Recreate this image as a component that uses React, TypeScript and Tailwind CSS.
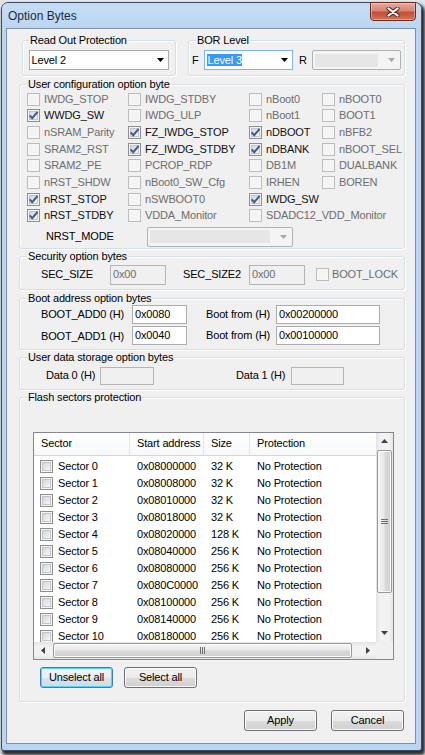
import React from "react";

type Cell = [string, boolean, boolean] | null;

const cfgRows: Cell[][] = [
  [["IWDG_STOP", false, true], ["IWDG_STDBY", false, true], ["nBoot0", false, true], ["nBOOT0", false, true]],
  [["WWDG_SW", true, false], ["IWDG_ULP", false, true], ["nBoot1", false, true], ["BOOT1", false, true]],
  [["nSRAM_Parity", false, true], ["FZ_IWDG_STOP", true, false], ["nDBOOT", true, false], ["nBFB2", false, true]],
  [["SRAM2_RST", false, true], ["FZ_IWDG_STDBY", true, false], ["nDBANK", true, false], ["nBOOT_SEL", false, true]],
  [["SRAM2_PE", false, true], ["PCROP_RDP", false, true], ["DB1M", false, true], ["DUALBANK", false, true]],
  [["nRST_SHDW", false, true], ["nBoot0_SW_Cfg", false, true], ["IRHEN", false, true], ["BOREN", false, true]],
  [["nRST_STOP", true, false], ["nSWBOOT0", false, true], ["IWDG_SW", true, false], null],
  [["nRST_STDBY", true, false], ["VDDA_Monitor", false, true], ["SDADC12_VDD_Monitor", false, true], null],
];

const colW = ["w-[101px]", "w-[121px]", "w-[73px]", "flex-1"];

const sectors: [string, string, string][] = [
  ["Sector 0", "0x08000000", "32 K"],
  ["Sector 1", "0x08008000", "32 K"],
  ["Sector 2", "0x08010000", "32 K"],
  ["Sector 3", "0x08018000", "32 K"],
  ["Sector 4", "0x08020000", "128 K"],
  ["Sector 5", "0x08040000", "256 K"],
  ["Sector 6", "0x08080000", "256 K"],
  ["Sector 7", "0x080C0000", "256 K"],
  ["Sector 8", "0x08100000", "256 K"],
  ["Sector 9", "0x08140000", "256 K"],
  ["Sector 10", "0x08180000", "256 K"],
];

function Box({ checked = false, disabled = false }: { checked?: boolean; disabled?: boolean }) {
  return (
    <span
      className={`flex h-[13px] w-[13px] shrink-0 items-center justify-center border ${
        disabled
          ? "border-[#bcbcbc] bg-[#f7f7f7]"
          : "border-[#8e8f8f] bg-[#f4f4f4]"
      }`}
    >
      <span
        className={`flex h-[9px] w-[9px] items-center justify-center ${
          disabled
            ? "bg-[#f4f4f4]"
            : "border border-[#c2c5c9] bg-[linear-gradient(135deg,#d3d6da,#f7f7f7)]"
        }`}
      >
        {checked && (
          <svg width="11" height="11" viewBox="0 0 11 11" className="shrink-0">
            <path d="M1.6 5.4 L4.2 8.2 L9.6 1.8" fill="none" stroke="#3d5a96" strokeWidth="2" />
          </svg>
        )}
      </span>
    </span>
  );
}

function Check({ label, checked, disabled }: { label: string; checked: boolean; disabled: boolean }) {
  return (
    <div className="flex items-center whitespace-nowrap">
      <Box checked={checked} disabled={disabled} />
      <span className={`ml-[4px] ${disabled ? "text-[#6d6d6d]" : "text-[#111111]"}`}>{label}</span>
    </div>
  );
}

function Arrow({ color }: { color: string }) {
  return (
    <svg width="7" height="4" viewBox="0 0 7 4" className="shrink-0">
      <polygon points="0,0 7,0 3.5,4" fill={color} />
    </svg>
  );
}

function Combo({
  w,
  text,
  focus = false,
  disabled = false,
}: {
  w: string;
  text?: string;
  focus?: boolean;
  disabled?: boolean;
}) {
  if (disabled) {
    return (
      <div className={`${w} flex h-[20px] shrink-0 items-center rounded-[2px] border border-[#adb2b5] bg-[#f4f4f4] pl-[2px] pr-[5px]`}>
        <div className="mr-[10px] h-[13px] flex-1 bg-[#e6e6e6]" />
        <Arrow color="#a6a6a6" />
      </div>
    );
  }
  return (
    <div
      className={`${w} flex h-[20px] shrink-0 items-center border bg-white pr-[4px] ${
        focus ? "border-[#7eb4ea] pl-[2px]" : "border-[#acacac] pl-[1px]"
      }`}
    >
      <div className="flex-1">
        <span className={`px-[0.5px] leading-[13px] ${focus ? "bg-[#3399ff] text-white" : "text-black"}`}>{text}</span>
      </div>
      <Arrow color="#000" />
    </div>
  );
}

function Input({ w, value, disabled = false, h = "h-[20px]" }: { w: string; value?: string; disabled?: boolean; h?: string }) {
  return (
    <div
      className={`${w} ${h} flex shrink-0 items-center border pl-[2px] ${
        disabled ? "border-[#b3b5b9] bg-[#f0f0f0] text-[#6d6d6d]" : "border-[#abadb3] bg-white text-black"
      }`}
    >
      {value}
    </div>
  );
}

function Btn({ w, label, def = false }: { w: string; label: string; def?: boolean }) {
  return (
    <div
      className={`${w} flex h-[21px] shrink-0 items-center justify-center rounded-[3px] border ${
        def
          ? "border-[#3c7fb1] bg-[linear-gradient(180deg,#f1f6f9_0%,#e6eef3_50%,#d9e4eb_50%,#cfdbe4_100%)] shadow-[inset_0_0_0_1px_#56d1f9]"
          : "border-[#707070] bg-[linear-gradient(180deg,#f2f2f2_0%,#ebebeb_50%,#dddddd_50%,#cfcfcf_100%)] shadow-[inset_0_0_0_1px_#fbfbfb]"
      }`}
    >
      {label}
    </div>
  );
}

function Group({
  label,
  className,
  legendMl = "ml-[7px]",
  children,
}: {
  label: string;
  className: string;
  legendMl?: string;
  children: React.ReactNode;
}) {
  return (
    <fieldset
      className={`shrink-0 rounded-[3px] border border-[#d5dfe5] shadow-[inset_1px_1px_0_#ffffff,1px_1px_0_#ffffff] ${className}`}
    >
      <legend className={`${legendMl} bg-[#f0f0f0] px-[1px] leading-[13px]`}>{label}</legend>
      {children}
    </fieldset>
  );
}

function VScroll() {
  return (
    <div className="flex h-[209px] w-[17px] flex-col bg-[linear-gradient(90deg,#e3e3e3,#f2f2f2_25%,#f2f2f2_75%,#e6e6e6)]">
      <div className="flex h-[17px] items-center justify-center">
        <svg width="7" height="4" viewBox="0 0 7 4">
          <polygon points="3.5,0 7,4 0,4" fill="#404040" />
        </svg>
      </div>
      <div className="mx-[1px] flex h-[143px] flex-col items-center justify-center gap-[1px] rounded-[2px] border border-[#9a9a9a] bg-[linear-gradient(90deg,#f5f5f5,#e9e9e9_45%,#d9d9d9_55%,#cfcfcf)] shadow-[inset_0_0_0_1px_#fafafa]">
        <div className="h-[1px] w-[7px] bg-[#6f6f6f]" />
        <div className="h-[1px] w-[7px] bg-[#6f6f6f]" />
        <div className="h-[1px] w-[7px] bg-[#6f6f6f]" />
      </div>
      <div className="flex-1" />
      <div className="flex h-[17px] items-center justify-center">
        <svg width="7" height="4" viewBox="0 0 7 4">
          <polygon points="0,0 7,0 3.5,4" fill="#404040" />
        </svg>
      </div>
    </div>
  );
}

function HScroll() {
  return (
    <div className="flex h-[17px] w-[342px] items-stretch bg-[linear-gradient(180deg,#e3e3e3,#f2f2f2_25%,#f2f2f2_75%,#e6e6e6)]">
      <div className="flex w-[17px] items-center justify-center">
        <svg width="4" height="7" viewBox="0 0 4 7">
          <polygon points="0,3.5 4,0 4,7" fill="#404040" />
        </svg>
      </div>
      <div className="my-[1px] ml-[2px] flex w-[299px] items-center justify-center gap-[1px] rounded-[2px] border border-[#9a9a9a] bg-[linear-gradient(180deg,#f5f5f5,#e9e9e9_45%,#d9d9d9_55%,#cfcfcf)] shadow-[inset_0_0_0_1px_#fafafa]">
        <div className="h-[7px] w-[1px] bg-[#6f6f6f]" />
        <div className="h-[7px] w-[1px] bg-[#6f6f6f]" />
        <div className="h-[7px] w-[1px] bg-[#6f6f6f]" />
      </div>
      <div className="flex-1" />
      <div className="flex w-[17px] items-center justify-center">
        <svg width="4" height="7" viewBox="0 0 4 7">
          <polygon points="0,0 4,3.5 0,7" fill="#404040" />
        </svg>
      </div>
    </div>
  );
}

function SectorList() {
  return (
    <div className="flex h-[228px] w-[361px] flex-col border border-[#828790] bg-white">
      <div className="flex h-[209px]">
        <div className="flex w-[342px] flex-col">
          <div className="flex h-[23px] shrink-0 border-b border-[#d5d5d5] bg-[linear-gradient(180deg,#ffffff,#f7f8f9)]">
            <div className="flex w-[96px] items-center border-r border-[#e3e5e8] pl-[7px]">Sector</div>
            <div className="flex w-[74px] items-center border-r border-[#e3e5e8] pl-[7px]">Start address</div>
            <div className="flex w-[46px] items-center border-r border-[#e3e5e8] pl-[7px]">Size</div>
            <div className="flex w-[126px] items-center pl-[7px]">Protection</div>
          </div>
          <div className="h-[186px] overflow-hidden pt-[2px]">
            {sectors.map(([name, addr, size]) => (
              <div key={name} className="flex h-[17px] items-center whitespace-nowrap">
                <div className="flex w-[96px] items-center pl-[6px]">
                  <Box />
                  <span className="ml-[5px]">{name}</span>
                </div>
                <div className="w-[74px] pl-[7px]">{addr}</div>
                <div className="w-[46px] pl-[7px]">{size}</div>
                <div className="w-[126px] pl-[7px]">No Protection</div>
              </div>
            ))}
          </div>
        </div>
        <VScroll />
      </div>
      <div className="flex h-[17px]">
        <HScroll />
        <div className="w-[17px] bg-[#f0f0f0]" />
      </div>
    </div>
  );
}

export default function App() {
  return (
    <div className="h-[755px] w-[425px] overflow-hidden bg-[#e2e4e7] font-['Liberation_Sans',Arial,sans-serif] text-[11px] leading-[13px] tracking-[-0.15px] text-black">
      <div className="ml-[1px] mt-[2px] flex h-[749px] w-[421px] flex-col rounded-t-[7px] rounded-b-[3px] border border-[#3b4d63] bg-[#b9d5f2] shadow-[2px_3px_3px_1px_rgba(0,0,0,0.8)]">
        {/* Title bar */}
        <div className="flex h-[25px] shrink-0 items-start rounded-t-[6px] bg-[linear-gradient(180deg,#c6dcf4,#bcd6f1)] pl-[6px] pr-[5px]">
          <div className="flex h-[25px] flex-1 items-center pt-[1px] text-[12px] tracking-normal text-[#1b2a3b]">Option Bytes</div>
          <div className="-mt-[1px] flex h-[19px] w-[46px] items-center justify-center rounded-b-[4px] border border-[#6b2a20] bg-[linear-gradient(180deg,#e8aa9c_0%,#d98371_45%,#c54e37_55%,#cf7458_100%)] shadow-[inset_0_0_0_1px_rgba(255,220,210,0.45)]">
            <svg width="14" height="10" viewBox="0 0 14 10">
              <path d="M2.5 1.5 L11.5 8.5 M11.5 1.5 L2.5 8.5" stroke="#5e2a22" strokeWidth="4.2" strokeLinecap="round" />
              <path d="M2.5 1.5 L11.5 8.5 M11.5 1.5 L2.5 8.5" stroke="#ffffff" strokeWidth="2.2" strokeLinecap="round" />
            </svg>
          </div>
        </div>

        {/* Client area */}
        <div className="ml-[4px] flex h-[716px] w-[410px] flex-col border border-[#7d91a9] bg-[#f0f0f0]">
          {/* Row 1 */}
          <div className="mt-[5px] flex">
            <Group label="Read Out Protection" className="ml-[15px] w-[154px] pb-[5px] pt-[3px]" legendMl="ml-[6px]">
              <div className="pl-[6px]">
                <Combo w="w-[140px]" text="Level 2" />
              </div>
            </Group>
            <Group label="BOR Level" className="ml-[12px] w-[217px] pb-[5px] pt-[3px]">
              <div className="flex items-center pl-[3px]">
                <span className="w-[12px]">F</span>
                <Combo w="w-[89px]" text="Level 3" focus />
                <span className="w-[19px] pl-[6px]">R</span>
                <Combo w="w-[89px]" disabled />
              </div>
            </Group>
          </div>

          {/* User configuration */}
          <Group label="User configuration option byte" className="ml-[12px] mt-[2px] w-[386px] pb-[1px]">
            <div className="flex flex-col pl-[7px]">
              {cfgRows.map((row, ri) => (
                <div key={ri} className="flex h-[16.67px] items-center">
                  {row.map((c, ci) => (
                    <div key={ci} className={`${colW[ci]} flex items-center`}>
                      {c && <Check label={c[0]} checked={c[1]} disabled={c[2]} />}
                    </div>
                  ))}
                </div>
              ))}
            </div>
            <div className="mt-[2.67px] flex h-[20px] items-center pl-[26px]">
              <span className="w-[101px]">NRST_MODE</span>
              <Combo w="w-[146px]" disabled />
            </div>
          </Group>

          {/* Security */}
          <Group label="Security option bytes" className="ml-[12px] mt-[1.5px] w-[386px] pb-[4px] pt-[1.5px]">
            <div className="flex h-[20px] items-center pl-[21px]">
              <span className="w-[69px]">SEC_SIZE</span>
              <Input w="w-[56px]" value="0x00" disabled />
              <span className="ml-[17px] w-[66px]">SEC_SIZE2</span>
              <Input w="w-[56px]" value="0x00" disabled />
              <div className="ml-[11px]">
                <div className="flex items-center whitespace-nowrap">
                  <Box disabled />
                  <span className="ml-[3px] text-[#6d6d6d]">BOOT_LOCK</span>
                </div>
              </div>
            </div>
          </Group>

          {/* Boot address */}
          <Group label="Boot address option bytes" className="ml-[12px] mt-[2px] w-[386px] pb-[4px]">
            <div className="flex h-[19px] items-center pl-[21px]">
              <span className="w-[91px]">BOOT_ADD0 (H)</span>
              <Input w="w-[55px]" h="h-[19px]" value="0x0080" />
              <span className="ml-[19px] w-[70px]">Boot from (H)</span>
              <Input w="w-[104px]" h="h-[19px]" value="0x00200000" />
            </div>
            <div className="mt-[2px] flex h-[19px] items-center pl-[21px]">
              <span className="w-[91px] pt-[3px]">BOOT_ADD1 (H)</span>
              <Input w="w-[55px]" h="h-[19px]" value="0x0040" />
              <span className="ml-[19px] w-[70px]">Boot from (H)</span>
              <Input w="w-[104px]" h="h-[19px]" value="0x00100000" />
            </div>
          </Group>

          {/* User data */}
          <Group label="User data storage option bytes" className="ml-[12px] mt-[1px] w-[386px] pb-[4px] pt-[3px]">
            <div className="flex h-[18px] items-center pl-[26px]">
              <span className="w-[54px]">Data 0 (H)</span>
              <Input w="w-[54px]" h="h-[18px]" disabled />
              <span className="ml-[82px] w-[55px]">Data 1 (H)</span>
              <Input w="w-[53px]" h="h-[18px]" disabled />
            </div>
          </Group>

          {/* Flash sectors */}
          <Group label="Flash sectors protection" className="ml-[12px] mt-[1.5px] w-[386px] pb-[13px] pt-[27.5px]">
            <div className="pl-[13px]">
              <SectorList />
            </div>
            <div className="mt-[7px] flex pl-[20px]">
              <Btn w="w-[73px]" label="Unselect all" def />
              <div className="ml-[11px]">
                <Btn w="w-[73px]" label="Select all" />
              </div>
            </div>
          </Group>

          {/* Bottom buttons */}
          <div className="mt-[8px] flex justify-end pr-[11px]">
            <Btn w="w-[73px]" label="Apply" />
            <div className="ml-[14px]">
              <Btn w="w-[73px]" label="Cancel" />
            </div>
          </div>
        </div>
      </div>
    </div>
  );
}
